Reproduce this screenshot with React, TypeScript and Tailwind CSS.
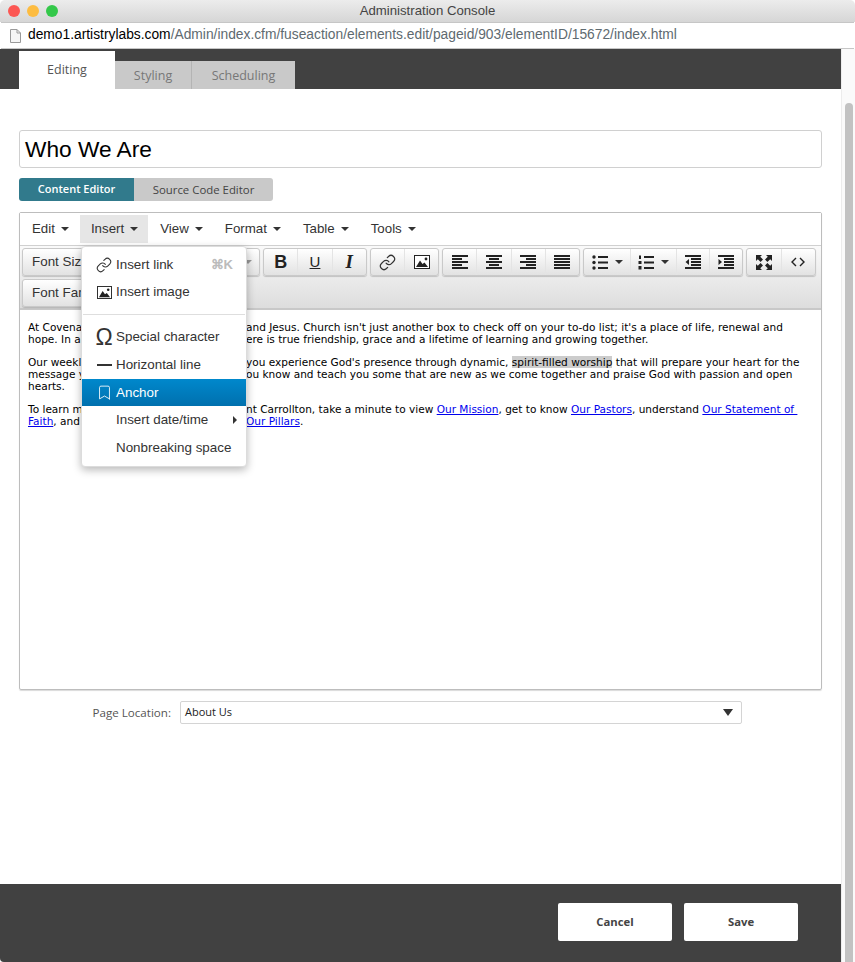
import { ReactNode } from 'react';
import { Bookmark, Link as LinkIcon } from 'lucide-react';

const sans = "font-['Liberation_Sans',Arial,sans-serif]";
const open = "font-['Open_Sans',sans-serif]";
const verdana = "font-['DejaVu_Sans',sans-serif]";

function Caret({ className = 'border-t-[#333]' }: { className?: string }) {
  return <span className={`inline-block w-0 h-0 border-x-[4px] border-x-transparent border-t-[4px] ${className}`} />;
}

function Lines({ rows }: { rows: [number, number][] }) {
  return (
    <svg width="16" height="14" viewBox="0 0 16 14" fill="#222">
      {rows.map(([x, w], i) => (
        <rect key={i} x={x} y={i * 3} width={w} height="2" />
      ))}
    </svg>
  );
}

function ImageIcon({ size = 15 }: { size?: number }) {
  return (
    <svg width={size} height={Math.round(size * 0.87)} viewBox="0 0 16 14">
      <rect x="0.5" y="0.5" width="15" height="13" fill="#fff" stroke="#222" />
      <path d="M2 12 L6 5.5 L8.5 9 L10.5 7.5 L14 12 Z" fill="#222" />
      <circle cx="12" cy="4" r="1.4" fill="#222" />
    </svg>
  );
}

function ListIcon({ numbered }: { numbered?: boolean }) {
  return (
    <svg width="16" height="15" viewBox="0 0 16 15" fill="#222">
      {numbered ? (
        <>
          <rect x="1" y="0.5" width="2" height="3.5" />
          <rect x="0.5" y="6" width="3" height="3" />
          <rect x="0.5" y="11" width="3" height="3.5" />
        </>
      ) : (
        <>
          <circle cx="2" cy="2" r="1.7" />
          <circle cx="2" cy="7.5" r="1.7" />
          <circle cx="2" cy="13" r="1.7" />
        </>
      )}
      <rect x="6" y="1" width="10" height="2" />
      <rect x="6" y="6.5" width="10" height="2" />
      <rect x="6" y="12" width="10" height="2" />
    </svg>
  );
}

function IndentIcon({ out }: { out?: boolean }) {
  return (
    <svg width="16" height="14" viewBox="0 0 16 14" fill="#222">
      <rect x="0" y="0" width="16" height="2" />
      <rect x="6" y="3" width="10" height="2" />
      <rect x="6" y="6" width="10" height="2" />
      <rect x="6" y="9" width="10" height="2" />
      <rect x="0" y="12" width="16" height="2" />
      <path d={out ? 'M4 4 V10 L0.5 7 Z' : 'M0.5 4 V10 L4 7 Z'} />
    </svg>
  );
}

function FullscreenIcon() {
  return (
    <svg width="16" height="15" viewBox="0 0 16 15" fill="#222">
      <path d="M0 0 H6 L4.2 1.8 L7 4.6 L4.6 7 L1.8 4.2 L0 6 Z" />
      <path d="M16 0 H10 L11.8 1.8 L9 4.6 L11.4 7 L14.2 4.2 L16 6 Z" />
      <path d="M0 15 H6 L4.2 13.2 L7 10.4 L4.6 8 L1.8 10.8 L0 9 Z" />
      <path d="M16 15 H10 L11.8 13.2 L9 10.4 L11.4 8 L14.2 10.8 L16 9 Z" />
    </svg>
  );
}

function CodeIcon() {
  return (
    <svg width="14" height="10" viewBox="0 0 14 10" fill="none" stroke="#222" strokeWidth="1.4">
      <path d="M5 1 L1 5 L5 9" />
      <path d="M9 1 L13 5 L9 9" />
    </svg>
  );
}

function Cell({ w, children }: { w: string; children: ReactNode }) {
  return (
    <div className={`${w} h-full flex items-center justify-center gap-[7px] border-l border-[#e4e4e4] first:border-l-0`}>
      {children}
    </div>
  );
}

function Group({ w, children }: { w: string; children: ReactNode }) {
  return (
    <div className={`${w} h-[28px] flex shrink-0 rounded-[3px] border border-[#c9c9c9] bg-gradient-to-b from-[#ffffff] to-[#e2e2e2] shadow-[0_1px_1px_rgba(0,0,0,0.18)]`}>
      {children}
    </div>
  );
}

function MenuItem({ icon, label, right, active }: { icon?: ReactNode; label: string; right?: ReactNode; active?: boolean }) {
  return (
    <div className={`h-[27.7px] flex items-center relative pl-[34px] pr-[12px] ${active ? 'bg-gradient-to-b from-[#0088cc] to-[#0070ae] text-white' : 'text-[#333]'}`}>
      {icon && <span className="absolute left-[12px] w-[20px] flex justify-center">{icon}</span>}
      <span className="flex-1 text-[13.4px] whitespace-nowrap">{label}</span>
      {right}
    </div>
  );
}

function InsertMenu() {
  return (
    <div className={`absolute left-[61px] top-[33px] w-[166px] h-[221px] z-10 bg-white rounded-[4px] border border-[#dcdcdc] shadow-[0_3px_8px_rgba(0,0,0,0.28)] pt-[4px] ${sans}`}>
      <MenuItem
        icon={<LinkIcon size={16} strokeWidth={1.6} color="#333" />}
        label="Insert link"
        right={<span className="text-[13px] font-bold text-[#bbb] mr-[1px]">⌘K</span>}
      />
      <MenuItem icon={<ImageIcon />} label="Insert image" />
      <div className="h-px bg-[#dedede] mx-[1px] mt-[8px] mb-[8px]" />
      <MenuItem icon={<span className="text-[23px] leading-none text-[#333]">Ω</span>} label="Special character" />
      <MenuItem icon={<span className="block w-[15px] h-[2px] bg-[#333]" />} label="Horizontal line" />
      <MenuItem icon={<Bookmark size={17} strokeWidth={1.2} color="#fff" />} label="Anchor" active />
      <MenuItem label="Insert date/time" right={<span className="w-0 h-0 border-y-[4px] border-y-transparent border-l-[4px] border-l-[#333] mr-[-3px]" />} />
      <MenuItem label="Nonbreaking space" />
    </div>
  );
}

function Toolbar() {
  return (
    <div className="h-[64px] bg-gradient-to-b from-[#fafafa] to-[#dddddd] border-b-2 border-[#c8c8c8] pl-[2px] pt-[2px]">
      <div className="flex gap-[3px] h-[28px]">
        <Group w="w-[238px]">
          <div className={`w-full pl-[9px] pr-[7px] h-full flex items-center justify-between text-[13.4px] text-[#333] ${sans}`}>
            Font Sizes
            <Caret className="border-t-[#999]" />
          </div>
        </Group>
        <Group w="w-[104px]">
          <Cell w="flex-1"><span className="text-[18px] font-bold text-[#222] font-['Liberation_Sans',sans-serif]">B</span></Cell>
          <Cell w="flex-1"><span className="text-[15px] underline text-[#222] font-['Liberation_Sans',sans-serif]">U</span></Cell>
          <Cell w="flex-1"><span className="text-[19px] italic font-bold text-[#222] font-['Liberation_Serif',serif]">I</span></Cell>
        </Group>
        <Group w="w-[69px]">
          <Cell w="flex-1"><LinkIcon size={17} strokeWidth={1.7} color="#333" /></Cell>
          <Cell w="flex-1"><ImageIcon size={16} /></Cell>
        </Group>
        <Group w="w-[138px]">
          <Cell w="flex-1"><Lines rows={[[0, 16], [0, 10], [0, 16], [0, 10], [0, 16]]} /></Cell>
          <Cell w="flex-1"><Lines rows={[[0, 16], [3, 10], [0, 16], [3, 10], [0, 16]]} /></Cell>
          <Cell w="flex-1"><Lines rows={[[0, 16], [6, 10], [0, 16], [6, 10], [0, 16]]} /></Cell>
          <Cell w="flex-1"><Lines rows={[[0, 16], [0, 16], [0, 16], [0, 16], [0, 16]]} /></Cell>
        </Group>
        <Group w="w-[160px]">
          <Cell w="w-[46px]"><ListIcon /><Caret /></Cell>
          <Cell w="w-[46px]"><ListIcon numbered /><Caret /></Cell>
          <Cell w="flex-1"><IndentIcon out /></Cell>
          <Cell w="flex-1"><IndentIcon /></Cell>
        </Group>
        <Group w="w-[70px]">
          <Cell w="flex-1"><FullscreenIcon /></Cell>
          <Cell w="flex-1"><CodeIcon /></Cell>
        </Group>
      </div>
      <div className="mt-[3px]">
        <Group w="w-[200px]">
          <div className={`pl-[9px] h-full flex items-center text-[13.4px] text-[#333] ${sans}`}>Font Family</div>
        </Group>
      </div>
    </div>
  );
}

function Anchor({ children }: { children: ReactNode }) {
  return <a className="text-[#0000ee] underline">{children}</a>;
}

// the start of each line sits left of the open menu, the rest picks up right of it
function Line({ start, children }: { start?: ReactNode; children?: ReactNode }) {
  return (
    <div className="whitespace-nowrap h-[12px] leading-[12px]">
      <span className="inline-block w-[218px] align-top">{start}</span>
      {children}
    </div>
  );
}

function Body() {
  return (
    <div className={`h-[379px] pl-[8px] pt-[11px] text-[10.55px] text-black ${verdana}`}>
      <Line start="At Covena">and Jesus. Church isn't just another box to check off on your to-do list; it's a place of life, renewal and</Line>
      <Line start="hope. In a">ere is true friendship, grace and a lifetime of learning and growing together.</Line>
      <div className="h-[10.5px]" />
      <Line start="Our weekl">you experience God's presence through dynamic, <span className="bg-[#cccccc]">spirit-filled worship</span> that will prepare your heart for the</Line>
      <Line start="message y">ou know and teach you some that are new as we come together and praise God with passion and open</Line>
      <Line start="hearts." />
      <div className="h-[11.5px]" />
      <Line start="To learn m">nt Carrollton, take a minute to view <Anchor>Our Mission</Anchor>, get to know <Anchor>Our Pastors</Anchor>, understand <Anchor>Our Statement of&nbsp;</Anchor></Line>
      <Line start={<><Anchor>Faith</Anchor>, and</>}><Anchor>Our Pillars</Anchor>.</Line>
    </div>
  );
}

function MenuBar() {
  const items = ['Edit', 'Insert', 'View', 'Format', 'Table', 'Tools'];
  return (
    <div className={`h-[33px] flex items-center pl-[1px] border-b border-[#d0d0d0] bg-white ${sans}`}>
      {items.map((item) => (
        <div
          key={item}
          className={`h-[28px] flex items-center gap-[6px] pl-[11px] pr-[10px] mr-[1px] text-[13.3px] text-[#333] ${item === 'Insert' ? 'bg-[#e6e6e6]' : ''}`}
        >
          {item}
          <Caret />
        </div>
      ))}
    </div>
  );
}

export default function App() {
  return (
    <div className="w-[855px] h-[962px] flex flex-col overflow-hidden bg-white">
      <div className={`h-[22px] shrink-0 relative flex items-center justify-center rounded-t-[5px] bg-gradient-to-b from-[#ececec] to-[#d6d6d6] text-[13.2px] text-[#444] ${sans}`}>
        <div className="absolute left-[8px] flex gap-[7px]">
          <span className="w-[12px] h-[12px] rounded-full bg-[#fc5753]" />
          <span className="w-[12px] h-[12px] rounded-full bg-[#fdbc40]" />
          <span className="w-[12px] h-[12px] rounded-full bg-[#34c84a]" />
        </div>
        Administration Console
      </div>

      <div className={`h-[27px] shrink-0 flex items-center pl-[9px] mx-[1px] border-y border-[#c6c6c6] bg-white text-[13.8px] ${sans}`}>
        <svg width="11" height="14" viewBox="0 0 11 14" className="mr-[7px]">
          <path d="M0.5 0.5 H7 L10.5 4 V13.5 H0.5 Z" fill="#f6f6f6" stroke="#9a9a9a" />
          <path d="M7 0.5 V4 H10.5" fill="none" stroke="#9a9a9a" />
        </svg>
        <span className="text-black">demo1.artistrylabs.com</span>
        <span className="text-[#5e6a70]">/Admin/index.cfm/fuseaction/elements.edit/pageid/903/elementID/15672/index.html</span>
      </div>

      <div className="flex-1 flex min-h-0">
        <div className="flex-1 flex flex-col min-w-0">
          <div className={`h-[40px] shrink-0 bg-[#414141] flex items-end pl-[19px] text-[12.5px] ${open}`}>
            <div className="w-[96px] h-[38px] bg-white text-[#555] text-center leading-[38px] pb-[2px]">Editing</div>
            <div className="w-[77px] h-[28px] bg-[#c9c9c9] text-[#777] text-center leading-[29px] border-r border-[#b4b4b4]">Styling</div>
            <div className="w-[103px] h-[28px] bg-[#c9c9c9] text-[#777] text-center leading-[29px]">Scheduling</div>
          </div>

          <div className="flex-1 pl-[19px] pr-[19px] pt-[41px]">
            <div className={`h-[38px] border border-[#d0d0d0] rounded-[3px] pl-[5px] pt-[1px] flex items-center text-[22.7px] text-black ${sans}`}>Who We Are</div>

            <div className={`mt-[10px] flex h-[23px] w-[254px] ${open}`}>
              <div className="w-[115px] bg-[#317a8c] text-white text-[11px] rounded-l-[3px] flex items-center justify-center font-semibold">Content Editor</div>
              <div className="w-[139px] bg-[#c9c9c9] text-[#444] text-[11.4px] rounded-r-[3px] flex items-center justify-center">Source Code Editor</div>
            </div>

            <div className="relative mt-[11px] h-[478px] border border-[#bdbdbd] rounded-[2px] shadow-[0_1px_1px_rgba(0,0,0,0.15)]">
              <MenuBar />
              <Toolbar />
              <Body />
              <InsertMenu />
            </div>

            <div className="mt-[11px] flex items-center">
              <div className={`w-[152px] text-right text-[11.6px] text-[#555] ${open}`}>Page Location:</div>
              <div className={`ml-[9px] w-[562px] h-[23px] border border-[#d4d4d4] rounded-[2px] pl-[4px] pr-[8px] flex items-center justify-between text-[11px] text-[#222] ${open}`}>
                About Us
                <Caret className="border-t-[#333] border-x-[5px] border-t-[7px]" />
              </div>
            </div>
          </div>

          <div className={`h-[78px] shrink-0 bg-[#414141] rounded-bl-[4px] flex items-start justify-end gap-[12px] pr-[43px] pt-[19px] text-[11.3px] font-bold text-[#444] ${open}`}>
            <div className="w-[114px] h-[38px] bg-white rounded-[2px] flex items-center justify-center">Cancel</div>
            <div className="w-[114px] h-[38px] bg-white rounded-[2px] flex items-center justify-center">Save</div>
          </div>
        </div>

        <div className="w-[14px] shrink-0 bg-[#fafafa] border-l border-[#ececec] pt-[54px] pl-[3px]">
          <div className="w-[8px] h-full rounded-t-full bg-[#c2c2c2]" />
        </div>
      </div>
    </div>
  );
}
